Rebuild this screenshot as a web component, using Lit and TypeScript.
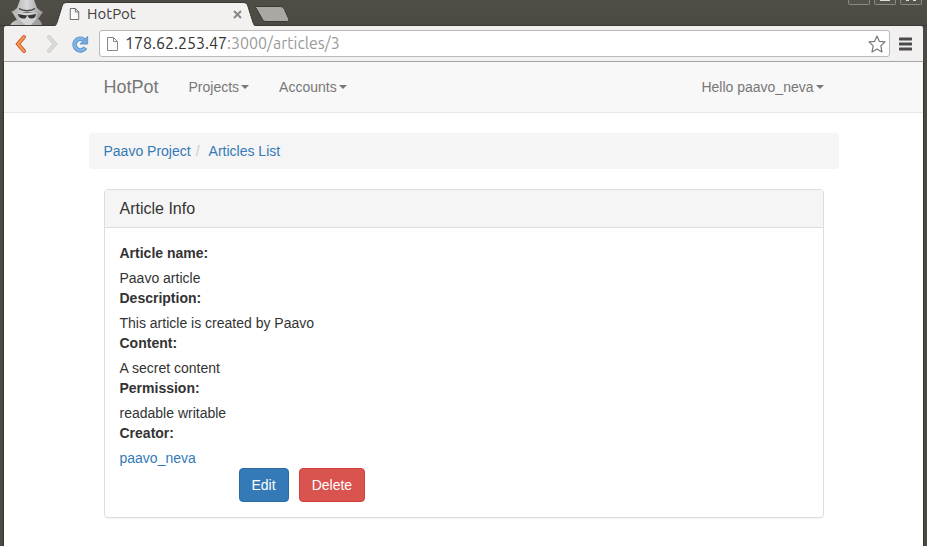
import { LitElement, html, css, svg } from "lit";
import { customElement } from "lit/decorators.js";

const fields = [
  { label: "Article name:", value: "Paavo article" },
  { label: "Description:", value: "This article is created by Paavo" },
  { label: "Content:", value: "A secret content" },
  { label: "Permission:", value: "readable writable" },
];

const pageIcon = svg`
  <path d="M1.5 1.5h6l4 4v9h-10z" fill="#fafafa" stroke="currentColor"/>
  <path d="M7.5 1.5v4h4" fill="none" stroke="currentColor"/>`;

@customElement("browser-chrome")
export class BrowserChrome extends LitElement {
  static styles = css`
    :host { display: block; font-family: "Ubuntu", "Noto Sans", sans-serif; }
    svg { display: block; flex: none; }
    button { border: 0; padding: 0; background: none; display: block; }
    .strip {
      display: flex; height: 26px; overflow: hidden;
      background: linear-gradient(#504d46, #4d4a43);
      box-shadow: inset 0 -1px #3b3934;
    }
    .spy { margin-left: 6px; }
    .tab { position: relative; width: 208px; height: 26px; margin-left: 3px; flex: none; }
    .shape { position: absolute; inset: 0; }
    .label {
      position: relative; display: flex; align-items: center; gap: 7px;
      height: 26px; padding: 2px 17px 0 18px; box-sizing: border-box;
      font-size: 15px; color: #3d3d3d;
    }
    .label svg { color: #555; }
    .name { flex: 1; }
    .controls { display: flex; gap: 4px; margin-left: auto; padding-right: 5px; }
    .control {
      width: 22px; height: 5px; box-sizing: border-box;
      border: 1px solid #8b8982; border-top: 0; border-radius: 0 0 2px 2px;
      background: #56534c; display: flex; justify-content: center;
    }
    .bar {
      display: flex; align-items: center; height: 36px; box-sizing: border-box;
      padding: 0 11px 0 10px; margin: 0 4px; background: #f2f1f0;
      border-bottom: 1px solid #a5a5a5; border-radius: 2px 2px 0 0;
    }
    .nav { display: flex; align-items: center; gap: 12px; width: 85px; flex: none; }
    .address {
      flex: 1; display: flex; align-items: center; height: 27px; box-sizing: border-box;
      border: 1px solid #bcbab8; border-radius: 3px; background: #fff;
      padding: 0 3px 0 6px; margin-right: 9px;
    }
    .url { flex: 1; height: 25px; margin-left: 6px; font-size: 16px; line-height: 25px; color: #9a9a9a; }
    .host { color: #333; }
  `;

  render() {
    return html`
      <div class="strip">
        <svg class="spy" width="42" height="25" viewBox="0 0 42 25">
          <defs>
            <linearGradient id="coat" x1="0" x2="1"><stop offset="0" stop-color="#c4c4c4"/><stop offset="1" stop-color="#999"/></linearGradient>
            <linearGradient id="hat" x1="0" x2="1"><stop offset="0" stop-color="#aaa"/><stop offset=".5" stop-color="#d8d8d8"/><stop offset="1" stop-color="#999"/></linearGradient>
          </defs>
          <path d="M4 26c1-3 3-5 7-6L6 12l7 1h17l7-1-5 7c3 2 4 4 4 7z" fill="url(#coat)"/>
          <path d="M12 13h19l-1 6-6 7h-4l-7-7z" fill="#d4d4d4"/>
          <path d="M5 12c2-1 4-2 6-4l3-8h14l3 8c2 2 4 3 6 4-6 2-8 2-10 1-5-1-7-1-12 0-3 1-5 1-10-1z" fill="url(#hat)"/>
          <path d="M13 8.500c4 3 12 3 16 0" fill="none" stroke="#454545" stroke-width="1.500"/>
          <path d="M12 14l9 1.500 9-1.500c0 3-2 5-5 4.500-2 0-3-1-3-2.500h-1c-1 2-2 3-4 2.500-3 0-5-2-5-4.500z" fill="#383838"/>
        </svg>
        <div class="tab">
          <svg class="shape" width="208" height="26" viewBox="0 0 208 26">
            <path d="M0 26.500c4 0 5-1 6-4l5-16c1-3 2-4 5-4h176c3 0 4 1 5 4l5 16c1 3 2 4 6 4z" fill="#f2f1f0" stroke="#393731"/>
          </svg>
          <div class="label">
            <svg width="11" height="14" viewBox="0 0 13 16">${pageIcon}</svg>
            <span class="name">HotPot</span>
            <button aria-label="Close tab"><svg width="9" height="9" viewBox="0 0 9 9">
              <path d="M1 1l7 7M8 1l-7 7" stroke="#888" stroke-width="2"/>
            </svg></button>
          </div>
        </div>
        <button class="new" aria-label="New tab"><svg class="plus" width="34" height="26" viewBox="4 0 34 26" overflow="visible">
          <path d="M1.500 6.500h23c3 0 4 1 5 3l4 9c1 2 0 3-2 3H11c-2 0-3-1-4-3L1 8c-1-1 0-1.500.5-1.500z" fill="#a9a8a4" stroke="#393731"/>
        </svg></button>
        <div class="controls">
          <button class="control" aria-label="Minimize"></button>
          <button class="control" aria-label="Maximize"><svg width="10" height="2"><path d="M0 0h10v1H0z" fill="#ddd"/></svg></button>
          <button class="control" aria-label="Close"><svg width="10" height="2"><path d="M0 0h3v1H0zM7 0h3v1H7z" fill="#ddd"/></svg></button>
        </div>
      </div>
      <div class="bar">
        <div class="nav">
          <button aria-label="Back"><svg width="19" height="20" viewBox="0 0 19 20">
            <path d="M10 3L4 10l6 7" fill="none" stroke="#d0581f" stroke-width="4" stroke-linecap="round"/>
            <path d="M10 3L4 10l6 7" fill="none" stroke="#f59a5c" stroke-width="2" stroke-linecap="round"/>
          </svg></button>
          <button aria-label="Forward"><svg width="14" height="20" viewBox="0 0 14 20">
            <path d="M4 3l6 7-6 7" fill="none" stroke="#ccc" stroke-width="4" stroke-linecap="round"/>
            <path d="M4 3l6 7-6 7" fill="none" stroke="#ddd" stroke-width="2" stroke-linecap="round"/>
          </svg></button>
          <button aria-label="Reload"><svg width="18" height="20" viewBox="0 0 20 20">
            <path d="M14.500 5.500A6.500 6.500 0 1 0 16 14" fill="none" stroke="#5a93cf" stroke-width="5"/>
            <path d="M18.500 1.500v8.500H10z" fill="#76a9dd" stroke="#5a93cf" stroke-linejoin="round"/>
            <path d="M14.500 5.500A6.500 6.500 0 1 0 15.500 14.500" fill="none" stroke="#83b3e3" stroke-width="3"/>
          </svg></button>
        </div>
        <div class="address">
          <svg width="13" height="16" viewBox="0 0 13 16" color="#888">${pageIcon}</svg>
          <div class="url"><span class="host">178.62.253.47</span>:3000/articles/3</div>
          <button aria-label="Bookmark"><svg width="18" height="18" viewBox="0 0 18 18">
            <path d="M9 1l2.300 5.300 5.700.6-4.200 4 1.200 6L9 14l-5 2.900 1.200-6-4.200-4 5.700-.6z" fill="#fff" stroke="#777" stroke-width="1.200" stroke-linejoin="round"/>
          </svg></button>
        </div>
        <button aria-label="Menu"><svg width="13" height="14" viewBox="0 0 13 14">
          <path d="M1 2h11M1 7h11M1 12h11" stroke="#4b4b4b" stroke-width="3" stroke-linecap="round"/>
        </svg></button>
      </div>
    `;
  }
}

@customElement("app-root")
export class AppRoot extends LitElement {
  static styles = css`
    :host {
      display: flex; flex-direction: column; min-height: 100vh; background: #4a4942;
      font: 14px/20px "Liberation Sans", Arial, sans-serif; color: #333;
    }
    a { color: #337ab7; text-decoration: none; }
    .page { flex: 1; margin: 0 4px; background: #fff; box-shadow: 0 1px 0 1px #34332e; }
    .navbar { background: #f8f8f8; border-bottom: 1px solid #e7e7e7; }
    .container { max-width: 750px; margin: 0 auto; }
    .menu { display: flex; align-items: center; height: 50px; padding: 0 15px; box-sizing: border-box; }
    .menu .brand { font-size: 18px; color: #777; margin-right: 15px; }
    .item {
      display: flex; align-items: center; gap: 2px; border: 0; background: none;
      padding: 0 15px; font: inherit; color: #777;
    }
    .user { margin-left: auto; padding-right: 0; }
    .caret { border: 4px solid transparent; border-top-color: #777; border-bottom: 0; }
    .crumbs {
      display: flex; margin: 20px 0; padding: 8px 15px; background: #f5f5f5;
      border-radius: 4px; list-style: none;
    }
    .slash { padding: 0 9px 0 5px; color: #ccc; }
    .panel {
      margin: 0 15px 20px; border: 1px solid #ddd; border-radius: 4px;
      box-shadow: 0 1px 1px rgba(0, 0, 0, 0.05);
    }
    .title {
      margin: 0; padding: 10px 15px; background: #f5f5f5; border-bottom: 1px solid #ddd;
      border-radius: 3px 3px 0 0; font-size: 16px; font-weight: 400; line-height: 17px;
    }
    .body { padding: 15px; }
    .fields { margin: 0; }
    dt { font-weight: 700; margin-bottom: 5px; }
    dd { margin: 0; }
    .actions { display: flex; gap: 10px; margin-left: 119px; }
    .btn {
      font: inherit; color: #fff; padding: 6px 12px; border: 1px solid #2e6da4;
      border-radius: 4px; background: #337ab7;
    }
    .danger { background: #d9534f; border-color: #d43f3a; }
  `;

  render() {
    return html`
      <browser-chrome></browser-chrome>
      <div class="page">
        <nav class="navbar">
          <div class="container menu">
            <a class="brand" href="#">HotPot</a>
            <button class="item">Projects<span class="caret"></span></button>
            <button class="item">Accounts<span class="caret"></span></button>
            <button class="item user">Hello paavo_neva<span class="caret"></span></button>
          </div>
        </nav>
        <main class="container">
          <ol class="crumbs">
            <li><a href="#">Paavo Project</a></li>
            <li><span class="slash">/</span><a href="#">Articles List</a></li>
          </ol>
          <section class="panel">
            <h3 class="title">Article Info</h3>
            <div class="body">
              <dl class="fields">
                ${fields.map((f) => html`<dt>${f.label}</dt><dd>${f.value}</dd>`)}
                <dt>Creator:</dt>
                <dd><a href="#">paavo_neva</a></dd>
              </dl>
              <div class="actions">
                <button class="btn">Edit</button>
                <button class="btn danger">Delete</button>
              </div>
            </div>
          </section>
        </main>
      </div>
    `;
  }
}
